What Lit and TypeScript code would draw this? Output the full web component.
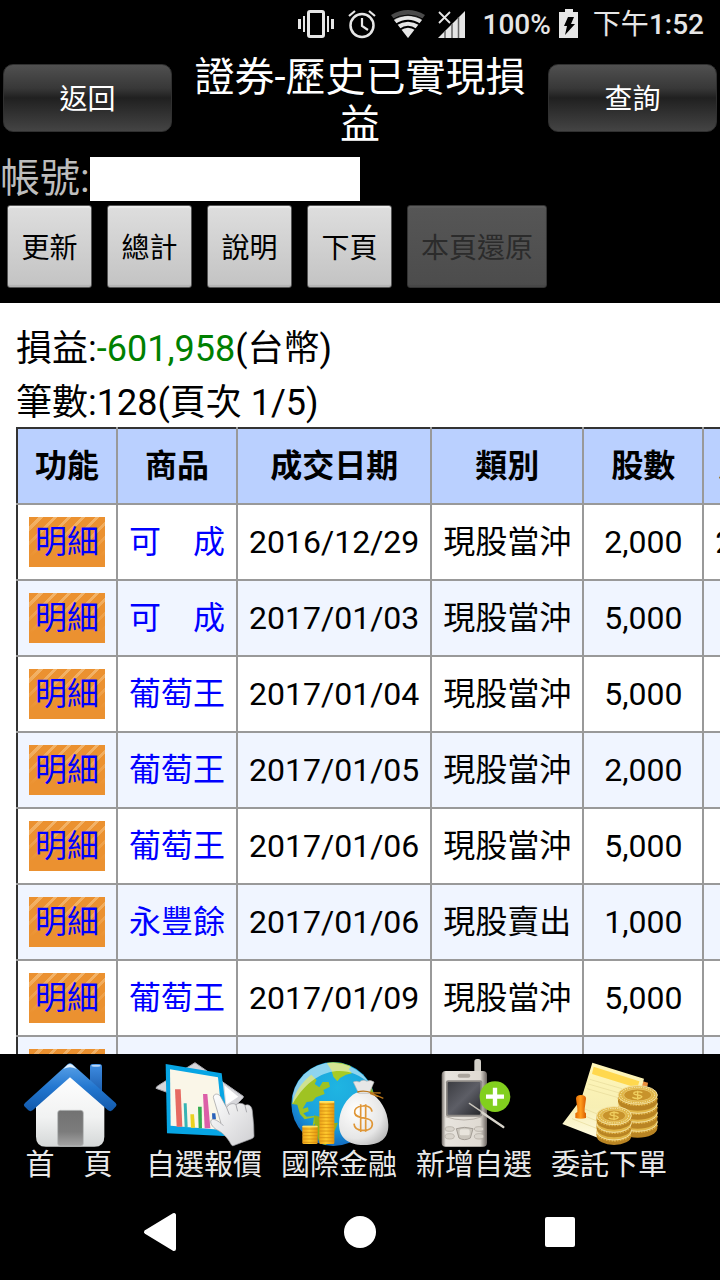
import { LitElement, html, css, svg } from "lit";
import { customElement } from "lit/decorators.js";

interface Trade {
  name: string;
  date: string;
  kind: string;
  shares: string;
  price: string;
}

const TRADES: Trade[] = [
  { name: "可　成", date: "2016/12/29", kind: "現股當沖", shares: "2,000", price: "227.0000" },
  { name: "可　成", date: "2017/01/03", kind: "現股當沖", shares: "5,000", price: "226.00" },
  { name: "葡萄王", date: "2017/01/04", kind: "現股當沖", shares: "5,000", price: "196.00" },
  { name: "葡萄王", date: "2017/01/05", kind: "現股當沖", shares: "2,000", price: "198.00" },
  { name: "葡萄王", date: "2017/01/06", kind: "現股當沖", shares: "5,000", price: "199.00" },
  { name: "永豐餘", date: "2017/01/06", kind: "現股賣出", shares: "1,000", price: "12.10" },
  { name: "葡萄王", date: "2017/01/09", kind: "現股當沖", shares: "5,000", price: "201.00" },
  { name: "葡萄王", date: "2017/01/10", kind: "現股當沖", shares: "5,000", price: "202.00" },
];

const houseIcon = svg`
  <defs>
    <linearGradient id="roof" x1="0" y1="0" x2="0" y2="1"><stop offset="0" stop-color="#5aa2e8"/><stop offset=".5" stop-color="#2377d0"/><stop offset="1" stop-color="#1259ab"/></linearGradient>
    <linearGradient id="chimney" x1="0" y1="0" x2="0" y2="1"><stop offset="0" stop-color="#3f8de2"/><stop offset="1" stop-color="#1656a6"/></linearGradient>
    <linearGradient id="wall" x1="0" y1="0" x2="0" y2="1"><stop offset="0" stop-color="#fff"/><stop offset=".6" stop-color="#f1f2f2"/><stop offset="1" stop-color="#d5d8d8"/></linearGradient>
    <linearGradient id="door" x1="0" y1="0" x2="0" y2="1"><stop offset="0" stop-color="#727272"/><stop offset=".6" stop-color="#7c7c7c"/><stop offset="1" stop-color="#a4a4a4"/></linearGradient>
  </defs>
  <rect x="264" y="30" width="36" height="100" rx="8" fill="url(#chimney)"/>
  <ellipse cx="282" cy="35" rx="14" ry="3" fill="#b9d8fa"/>
  <path d="M204 58 102 148V248Q102 278 132 278H277Q307 278 307 248V148Z" fill="url(#wall)"/>
  <rect x="167" y="169" width="77" height="107" rx="8" fill="url(#door)" stroke="#b9bcbc" stroke-width="2"/>
  <path d="M197 31Q204 25 211 31L341 147Q346 152 342 157L331 169Q325 174 318 169L204 70 92 169Q85 174 79 169L67 157Q63 152 69 147Z" fill="url(#roof)"/>
  <path d="M190 39Q204 21 218 39L224 45Q204 34 184 45Z" fill="#e4f2ff"/>`;

const chartIcon = svg`
  <defs>
    <linearGradient id="hand" x1="0" y1="0" x2="1" y2="1"><stop offset="0" stop-color="#fff"/><stop offset="1" stop-color="#cfcfd2"/></linearGradient>
  </defs>
  <path d="M174 26 319 127Q320 131 314 136L270 180 57 103Q57 98 65 94Z" fill="#d7d7db" stroke="#a9a9ae" stroke-width="3"/>
  <path d="M262 94 304 128 268 152Z" fill="#fff"/>
  <path d="M86 30 254 58 276 247 90 238Z" fill="#07a5e4"/>
  <path d="M99 46 243 70 259 228 101 215Z" fill="#faf6e8"/>
  <path d="M114 106H131L136 218H119Z" fill="#e66a62"/>
  <path d="M140 148H149L152 220H143Z" fill="#38b4b5"/>
  <path d="M160 181H171L174 221H162Z" fill="#ead21e"/>
  <path d="M183 158H194L195 223H185Z" fill="#35ad50"/>
  <path d="M198 120H211L220 223H203Z" fill="#dc5ea8"/>
  <path d="M225 178H235L237 196H226Z" fill="#2b62ba"/>
  <path d="M229 130C230 117 245 118 251 128L269 161C275 149 288 146 297 152C306 145 319 148 324 154C336 148 345 158 346 171L350 212 351 246C351 251 347 253 342 255L289 275C286 276 283 273 281 269C270 249 257 236 239 227C226 220 217 204 223 198C228 193 239 198 252 208Z" fill="url(#hand)" stroke="#97979c" stroke-width="2"/>
  <path d="M269 161 277 182M297 153 302 172M324 155 329 175M252 208 259 215" fill="none" stroke="#aaaaae" stroke-width="3"/>`;

const coinLines = (x: number, w: number, top: number, bottom: number) => {
  const lines = [];
  for (let y = top + 10; y < bottom; y += 10) {
    lines.push(svg`<path d=${`M${x} ${y}H${x + w}`} fill="none" stroke="#cf8410" stroke-width="2"/>`);
  }
  return svg`<rect x=${x} y=${top} width=${w} height=${bottom - top} rx="4" fill="url(#gold)"/>${lines}
    <rect x=${x} y=${top} width=${w} height="5" rx="2" fill="#ffe36b"/>`;
};

const globeIcon = svg`
  <defs>
    <radialGradient id="sea" cx=".55" cy=".3" r=".75"><stop offset="0" stop-color="#1fb5e2"/><stop offset=".6" stop-color="#1ba3dc"/><stop offset="1" stop-color="#1160bd"/></radialGradient>
    <linearGradient id="gold" x1="0" x2="1" y1="0" y2="0"><stop offset="0" stop-color="#eca41a"/><stop offset=".45" stop-color="#ffcb2e"/><stop offset="1" stop-color="#e5960f"/></linearGradient>
    <radialGradient id="bag" cx=".35" cy=".35" r=".75"><stop offset="0" stop-color="#fff"/><stop offset=".7" stop-color="#e6e6e6"/><stop offset="1" stop-color="#bcbcbc"/></radialGradient>
    <clipPath id="disc"><circle cx="184" cy="150" r="125"/></clipPath>
  </defs>
  <circle cx="184" cy="150" r="126" fill="url(#sea)"/>
  <g clip-path="url(#disc)">
    <path d="M60 150C70 112 88 86 118 62L134 78 128 90 142 100 152 84 170 84 174 98 154 108 158 120 132 130 122 142 104 144 92 164 108 160 110 172 94 178 104 188 126 186 140 198 122 216 126 190 98 196 84 180 76 152Z" fill="#9fc322"/>
    <path d="M164 26C190 18 214 22 240 34L230 46 240 58 222 62 204 72 196 82 184 68 178 48Z" fill="#a8cb24"/>
    <path d="M126 184 148 190 178 208 198 206 190 226 174 252 158 280 140 260 130 220Z" fill="#8cb21c"/>
    <path d="M278 92 300 98 316 140 290 150 268 120Z" fill="#8cb21c"/>
    <path d="M62 120C84 40 170 0 250 46C270 58 284 72 292 88C230 30 130 32 62 150Z" fill="#fff" opacity=".5"/>
  </g>
  ${coinLines(91, 46, 215, 270)}
  ${coinLines(142, 45, 141, 270)}
  <path d="M253 116C224 130 201 168 201 210C201 250 226 273 276 273C326 273 350 252 349 212C348 168 322 132 296 116Z" fill="url(#bag)"/>
  <path d="M244 84Q252 80 262 84 274 74 284 82 296 76 306 84L292 118H260Z" fill="#e7e7e7" stroke="#b8b8b8" stroke-width="2"/>
  <path d="M256 114Q276 108 298 116M294 116 334 133M294 118 318 128M296 116 326 117" fill="none" stroke="#bb771b" stroke-width="4"/>
  <path d="M300 173C298 158 283 155 272 156C254 157 246 166 248 177C252 199 302 184 301 211C300 225 286 230 272 229C258 229 247 223 246 209M266 151V234M281 151V234" fill="none" stroke="#df9636" stroke-width="5"/>`;

const phoneIcon = svg`
  <defs>
    <linearGradient id="shell" x1="0" x2="1" y1="0" y2="0"><stop offset="0" stop-color="#746e69"/><stop offset=".09" stop-color="#e8e4de"/><stop offset=".85" stop-color="#dfdad2"/><stop offset="1" stop-color="#67605c"/></linearGradient>
    <linearGradient id="glass" x1="0" y1="0" x2="1" y2="1"><stop offset="0" stop-color="#3c3d42"/><stop offset=".5" stop-color="#5d5e66"/><stop offset="1" stop-color="#27282c"/></linearGradient>
  </defs>
  <rect x="202" y="15" width="20" height="52" rx="8" fill="#d3d0c8"/>
  <rect x="104" y="51" width="136" height="227" rx="12" fill="url(#shell)"/>
  <rect x="152" y="59" width="38" height="12" rx="6" fill="#aaa49c"/>
  <rect x="117" y="79" width="109" height="109" rx="6" fill="#8d8985"/>
  <rect x="122" y="84" width="98" height="98" rx="3" fill="url(#glass)"/>
  <path d="M116 188Q171 208 226 188" fill="none" stroke="#b7b1a9" stroke-width="3"/>
  <path d="M148 224Q172 216 198 224L190 252Q172 262 156 252Z" fill="#cbc6bd" stroke="#a39d95" stroke-width="3"/>
  <rect x="158" y="226" width="30" height="18" rx="5" fill="#e8e4dc"/>
  <g fill="#d9d4cc" stroke="#aaa49c" stroke-width="2">
    <ellipse cx="128" cy="225" rx="14" ry="7"/><ellipse cx="216" cy="225" rx="14" ry="7"/>
    <ellipse cx="128" cy="247" rx="14" ry="8"/><ellipse cx="216" cy="247" rx="14" ry="8"/>
  </g>
  <circle cx="264" cy="128" r="46" fill="#82cf1e"/>
  <path d="M264 101V155M237 128H291" stroke="#fff" stroke-width="13"/>
  <path d="M187 148 240 184" stroke="#c9c4bb" stroke-width="4" stroke-linecap="round"/>
  <path d="M226 176 289 219" stroke="#d8d4cb" stroke-width="7" stroke-linecap="round"/>`;

const coinStack = (cx: number, cy: number, rx: number, ry: number, count: number, step: number) => {
  const coins = [];
  for (let i = count; i >= 0; i--) {
    const y = cy + i * step;
    coins.push(svg`
      <path d=${`M${cx - rx} ${y}v${step - 8}a${rx} ${ry} 0 0 0 ${rx * 2} 0v${8 - step}z`} fill="#b98423"/>
      <path d=${`M${cx - rx + 2} ${y + 8}a${rx} ${ry} 0 0 0 ${rx * 2 - 4} 0`} fill="none" stroke="#dfb043" stroke-width="9" stroke-dasharray="5 3"/>
      <ellipse cx=${cx} cy=${y} rx=${rx} ry=${ry} fill="#e0b648" stroke="#f4e2a0" stroke-width="3"/>`);
  }
  return svg`${coins}
    <ellipse cx=${cx} cy=${cy} rx=${rx - 8} ry=${ry - 5} fill="none" stroke="#f8ecb8" stroke-width="3" stroke-dasharray="4 3"/>
    <ellipse cx=${cx} cy=${cy} rx=${rx - 17} ry=${ry - 10} fill="#c8932b" stroke="#f0d27a" stroke-width="2"/>
    <path d=${`M${cx + 14} ${cy - 7}q-14 -6 -24 -1q-6 6 10 8q20 4 8 9q-12 4 -24 -2M${cx} ${cy - 13}v27`} fill="none" stroke="#f0cf60" stroke-width="4"/>`;
};

const orderIcon = svg`
  <defs>
    <linearGradient id="paper" x1="0" y1="0" x2="0" y2="1"><stop offset="0" stop-color="#fff6b8"/><stop offset=".6" stop-color="#f7efb4"/><stop offset="1" stop-color="#fffbe2"/></linearGradient>
    <linearGradient id="stamp" x1="0" x2="1" y1="0" y2="0"><stop offset="0" stop-color="#e56900"/><stop offset=".5" stop-color="#ff9c1c"/><stop offset="1" stop-color="#d95d00"/></linearGradient>
  </defs>
  <path d="M302 82 318 86 316 98 298 96Z" fill="#e98d3c"/>
  <path d="M151 26 306 74 262 240 169 252 61 210 118 134Z" fill="url(#paper)"/>
  <path d="M155 38 292 82 286 102 150 60Z" fill="#ffd84e"/>
  <path d="M143 76 240 104M139 90 236 118M135 104 232 132M116 160 186 188M104 176 170 203M90 194 166 224" stroke="#e5d999" stroke-width="2"/>
  <path d="M102 134Q102 123 117 123 132 123 132 134L128 164V174L132 178V192Q117 196 100 192V178L106 174V164Z" fill="url(#stamp)"/>
  ${coinStack(287, 123, 59, 28, 3, 27)}
  ${coinStack(216, 185, 52, 27, 2, 23)}`;

const TABS = [
  { label: "首　頁", icon: houseIcon },
  { label: "自選報價", icon: chartIcon },
  { label: "國際金融", icon: globeIcon },
  { label: "新增自選", icon: phoneIcon },
  { label: "委託下單", icon: orderIcon },
];

@customElement("status-bar")
class StatusBar extends LitElement {
  static styles = css`
    :host {
      display: flex;
      align-items: center;
      justify-content: flex-end;
      height: 48px;
      padding-right: 16px;
      color: #e6e6e6;
      font-size: 28px;
      font-weight: 500;
      line-height: 48px;
    }
    svg { display: block; flex: none; }
    span { padding-top: 2px; }
    .time { margin-left: 14px; }
    .cjk { font-weight: 400; }
    .battery { margin-left: 8px; }
    .percent { margin-left: 16px; }
  `;
  render() {
    return html`
      <svg width="170" height="48" viewBox="-1 0 170 48" fill="#e6e6e6">
        <path d="M0 19h3v10H0zM5 16h2v16H5zM29 16h2v16h-2zM33 19h3v10h-3z"/>
        <rect x="10.500" y="11.500" width="15" height="25" rx="1.500" fill="none" stroke="#e6e6e6" stroke-width="3"/>
        <circle cx="64" cy="25.500" r="11.500" fill="none" stroke="#e6e6e6" stroke-width="2.500"/>
        <path d="M64 18v8l6 4M51 16l6-5M77 16l-6-5" fill="none" stroke="#e6e6e6" stroke-width="2.200"/>
        <path d="M93 15Q110 5 127 15L110 38Z" fill="#4a4a4a"/>
        <path d="M96 20Q110 12 124 20L110 38Z"/>
        <path d="M98 24.500Q110 17 122 24.500M102 29.500Q110 24 118 29.500" fill="none" stroke="#000" stroke-width="1.800"/>
        <path d="M93 20Q110 10 127 20" fill="none" stroke="#000" stroke-width="1"/>
        <path d="M167 11v27h-27z"/>
        <path d="M147 31v7M154 24v14M160.500 17v21" stroke="#666" stroke-width="1.500"/>
        <path d="M141 12l11 11M152 12l-11 11" stroke="#e6e6e6" stroke-width="1.800"/>
      </svg>
      <span class="percent">100%</span>
      <svg class="battery" width="20" height="48" viewBox="0 0 20 48">
        <path d="M6 9h8v3h5v26H0V12h6z" fill="#e6e6e6"/>
        <path d="M9 17h6l-3 7h4L6 35l2-9H5z" fill="#000"/>
      </svg>
      <span class="time"><span class="cjk">下午</span>1:52</span>
    `;
  }
}

@customElement("tab-bar")
class TabBar extends LitElement {
  static styles = css`
    :host { display: block; background: #000; overflow: hidden; }
    nav { display: flex; padding: 0 2px; }
    a {
      display: flex;
      flex: none;
      flex-direction: column;
      width: 134px;
      padding-right: 1px;
      height: 130px;
      align-items: center;
      color: #e9e9e9;
      font-size: 29px;
      line-height: 30px;
      text-decoration: none;
      white-space: nowrap;
    }
    svg { display: block; }
    .label {
      text-shadow: 0 0 2px #000;
    }
  `;
  render() {
    return html`<nav aria-label="主選單">
      ${TABS.map((tab) => html`<a href="#">
        <svg width="135" height="96" viewBox="0 0 405 288" aria-hidden="true">${tab.icon}</svg>
        <span class="label">${tab.label}</span>
      </a>`)}
    </nav>`;
  }
}

@customElement("system-nav")
class SystemNav extends LitElement {
  static styles = css`
    :host {
      display: flex;
      justify-content: center;
      gap: 104px;
      height: 96px;
      background: #000;
    }
    button { padding: 0; border: 0; background: none; }
    svg { display: block; }
  `;
  render() {
    return html`
      <button aria-label="Back"><svg width="96" height="96" viewBox="0 0 96 96"><path d="M62 31v34L34 48z" fill="#fff" stroke="#fff" stroke-width="4" stroke-linejoin="round"/></svg></button>
      <button aria-label="Home"><svg width="96" height="96" viewBox="0 0 96 96"><circle cx="48" cy="48" r="16" fill="#fff"/></svg></button>
      <button aria-label="Overview"><svg width="96" height="96" viewBox="0 0 96 96"><rect x="33" y="33" width="30" height="30" rx="2" fill="#fff"/></svg></button>
    `;
  }
}

@customElement("app-root")
class AppRoot extends LitElement {
  static styles = css`
    :host {
      display: flex;
      flex-direction: column;
      height: 100vh;
      overflow: hidden;
      background: #000;
      font-family: Roboto, "Noto Sans CJK TC", sans-serif;
    }
    button, input { font-family: inherit; }
    .title-bar {
      display: flex;
      align-items: center;
      gap: 16px;
      padding: 0 3px 9px;
    }
    .title-bar button {
      flex: none;
      width: 169px;
      height: 68px;
      padding: 0 0 2px;
      border: 1px solid #303030;
      border-radius: 10px;
      background: linear-gradient(#505050, #383838 35%, #202020 50%, #2b2b2b 65%, #444);
      color: #fff;
      font-size: 28px;
    }
    h1 {
      flex: 1;
      margin: 0;
      padding-top: 6px;
      color: #fff;
      font-size: 40px;
      font-weight: 400;
      line-height: 47px;
      text-align: center;
    }
    .account {
      display: flex;
      align-items: flex-end;
      color: #bdbdbd;
      font-size: 40px;
      line-height: 44px;
    }
    .account input {
      width: 270px;
      height: 44px;
      padding: 0;
      border: 0;
      background: #fff;
      font-size: 28px;
    }
    .tools {
      display: flex;
      gap: 15px;
      padding: 4px 7px 15px;
    }
    .tools button {
      height: 83px;
      min-width: 85px;
      padding: 0 13px 2px;
      border: 1px solid #555;
      border-radius: 3px;
      background: linear-gradient(#dedede, #c3c3c3);
      box-shadow: inset 0 2px 1px #ececec, inset 0 -2px 1px #b4b4b4;
      color: #000;
      font-size: 28px;
    }
    .tools button:disabled {
      border-color: #333;
      background: linear-gradient(#565656, #4c4c4c);
      box-shadow: inset 0 2px 1px #5c5c5c, inset 0 -2px 1px #474747;
      color: #2b2b2b;
    }
    main {
      flex: 1;
      min-height: 0;
      overflow: hidden;
      padding: 22px 16px 0;
      background: #fff;
      color: #000;
    }
    .summary {
      margin: 0;
      font-size: 36px;
      line-height: 48px;
    }
    .summary + .summary { margin-top: 6px; }
    .loss { color: #008000; }
    table {
      border-collapse: collapse;
      font-size: 32px;
      line-height: 50px;
      text-align: center;
      white-space: nowrap;
    }
    th, td {
      padding: 12px 11px;
      border: 2px solid #999;
    }
    th { border-top-color: #333; background: #bad0ff; font-weight: 700; }
    th:first-child, td:first-child { border-left-color: #333; }
    .shares { min-width: 96px; }
    tbody tr:nth-child(even) { background: #f0f5ff; }
    a { color: #00f; text-decoration: none; }
    .detail {
      display: block;
      width: 76px;
      height: 50px;
      background:
        linear-gradient(transparent, #eb9130 80%),
        repeating-linear-gradient(135deg, #eb9130 0 7px, #f3b56c 7px 10px);
    }
  `;
  render() {
    return html`
      <status-bar></status-bar>
      <header>
        <div class="title-bar">
          <button>返回</button>
          <h1>證券-歷史已實現損益</h1>
          <button>查詢</button>
        </div>
        <div class="account">
          <label for="account">帳號:</label>
          <input id="account" type="text" />
        </div>
        <div class="tools">
          <button>更新</button>
          <button>總計</button>
          <button>說明</button>
          <button>下頁</button>
          <button disabled>本頁還原</button>
        </div>
      </header>
      <main>
        <p class="summary">損益:<span class="loss">-601,958</span>(台幣)</p>
        <p class="summary">筆數:128(頁次 1/5)</p>
        <table>
          <thead>
            <tr><th>功能</th><th>商品</th><th>成交日期</th><th>類別</th><th class="shares">股數</th><th>成交單價</th></tr>
          </thead>
          <tbody>
            ${TRADES.map((t) => html`<tr>
              <td><a class="detail" href="#">明細</a></td>
              <td><a href="#">${t.name}</a></td>
              <td>${t.date}</td>
              <td>${t.kind}</td>
              <td>${t.shares}</td>
              <td>${t.price}</td>
            </tr>`)}
          </tbody>
        </table>
      </main>
      <tab-bar></tab-bar>
      <system-nav></system-nav>
    `;
  }
}
